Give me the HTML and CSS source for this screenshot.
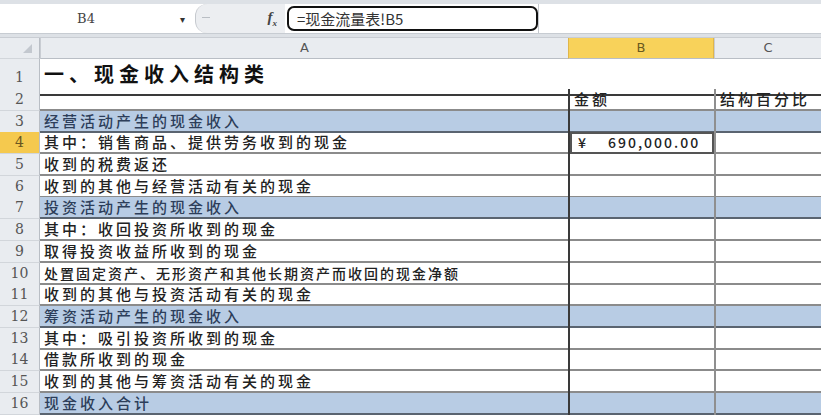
FILE: index.html
```html
<!DOCTYPE html>
<html>
<head>
  <title>现金收入结构类</title>
  <link rel="stylesheet" href="styles.css">
</head>
<body>
  <div class="formula-bar">
    <div class="name-box">
      <span class="cell-ref">B4</span>
      <span class="arrow">&#9662;</span>
    </div>
    <div class="splitter">
      <span class="knob"></span>
      <span class="fx">f<sub>x</sub></span>
    </div>
    <div class="formula">=现金流量表!B5</div>
    <div class="formula-rest"></div>
  </div>

  <div class="sheet">
    <div class="row col-heads">
      <div class="num corner"><span class="tri"></span></div>
      <div class="head">A</div>
      <div class="head active">B</div>
      <div class="head">C</div>
    </div>

    <div class="row title-row">
      <div class="num">1</div>
      <div class="cell a title">一、现金收入结构类</div>
      <div class="cell b"></div>
      <div class="cell c"></div>
    </div>
    <div class="row">
      <div class="num">2</div>
      <div class="cell a"></div>
      <div class="cell b">金额</div>
      <div class="cell c">结构百分比</div>
    </div>
    <div class="row blue">
      <div class="num">3</div>
      <div class="cell a">经营活动产生的现金收入</div>
      <div class="cell b"></div>
      <div class="cell c"></div>
    </div>
    <div class="row">
      <div class="num sel">4</div>
      <div class="cell a">其中：销售商品、提供劳务收到的现金</div>
      <div class="cell b picked"><span>¥</span><span>690,000.00</span></div>
      <div class="cell c"></div>
    </div>
    <div class="row">
      <div class="num">5</div>
      <div class="cell a">收到的税费返还</div>
      <div class="cell b"></div>
      <div class="cell c"></div>
    </div>
    <div class="row">
      <div class="num">6</div>
      <div class="cell a">收到的其他与经营活动有关的现金</div>
      <div class="cell b"></div>
      <div class="cell c"></div>
    </div>
    <div class="row blue">
      <div class="num">7</div>
      <div class="cell a">投资活动产生的现金收入</div>
      <div class="cell b"></div>
      <div class="cell c"></div>
    </div>
    <div class="row">
      <div class="num">8</div>
      <div class="cell a">其中：收回投资所收到的现金</div>
      <div class="cell b"></div>
      <div class="cell c"></div>
    </div>
    <div class="row">
      <div class="num">9</div>
      <div class="cell a">取得投资收益所收到的现金</div>
      <div class="cell b"></div>
      <div class="cell c"></div>
    </div>
    <div class="row">
      <div class="num">10</div>
      <div class="cell a narrow">处置固定资产、无形资产和其他长期资产而收回的现金净额</div>
      <div class="cell b"></div>
      <div class="cell c"></div>
    </div>
    <div class="row">
      <div class="num">11</div>
      <div class="cell a">收到的其他与投资活动有关的现金</div>
      <div class="cell b"></div>
      <div class="cell c"></div>
    </div>
    <div class="row blue">
      <div class="num">12</div>
      <div class="cell a">筹资活动产生的现金收入</div>
      <div class="cell b"></div>
      <div class="cell c"></div>
    </div>
    <div class="row">
      <div class="num">13</div>
      <div class="cell a">其中：吸引投资所收到的现金</div>
      <div class="cell b"></div>
      <div class="cell c"></div>
    </div>
    <div class="row">
      <div class="num">14</div>
      <div class="cell a">借款所收到的现金</div>
      <div class="cell b"></div>
      <div class="cell c"></div>
    </div>
    <div class="row">
      <div class="num">15</div>
      <div class="cell a">收到的其他与筹资活动有关的现金</div>
      <div class="cell b"></div>
      <div class="cell c"></div>
    </div>
    <div class="row blue">
      <div class="num">16</div>
      <div class="cell a">现金收入合计</div>
      <div class="cell b"></div>
      <div class="cell c"></div>
    </div>
  </div>
</body>
</html>
```

FILE: styles.css
```css
body {
  margin: 0;
  width: 821px;
  height: 415px;
  overflow: hidden;
  background-color: #dde1e6;
  font-family: "Noto Sans CJK SC", "DejaVu Sans", sans-serif;
  color: #222222;
}

/* formula bar */
.formula-bar {
  display: flex;
  height: 29px;
  margin-top: 4px;
  background-color: #ffffff;
  border-bottom: 1px solid #c7ccd2;
}

.name-box {
  width: 195px;
  display: flex;
  align-items: center;
  background-color: #ffffff;
}

.cell-ref {
  width: 172px;
  text-align: center;
  font-family: "DejaVu Serif", serif;
  font-size: 13px;
  color: #444444;
}

.arrow {
  font-size: 10px;
  color: #333333;
  margin-left: 8px;
}

.splitter {
  width: 90px;
  display: flex;
  align-items: center;
  justify-content: space-between;
  background-color: #eceef1;
  border-left: 1px solid #c5c9ce;
  border-radius: 12px 0 0 12px;
  padding: 0 8px 0 6px;
  box-sizing: border-box;
}

.knob {
  width: 8px;
  height: 3px;
  border-top: 1px solid #b9bec4;
}

.fx {
  font-family: "Liberation Serif", serif;
  font-style: italic;
  font-weight: bold;
  font-size: 15px;
  color: #444444;
}

.fx sub {
  font-size: 9px;
}

.formula {
  width: 251px;
  box-sizing: border-box;
  margin: 2px 0 0 2px;
  height: 25px;
  border: 2px solid #111111;
  border-radius: 7px;
  padding: 0 8px;
  line-height: 21px;
  font-size: 15px;
  color: #333333;
  background-color: #ffffff;
}

.formula-rest {
  flex: 1;
  border-left: 1px solid #c5c9ce;
}

/* sheet */
.sheet {
  margin-top: 3px;
  background-color: #ffffff;
}

.row {
  display: grid;
  grid-template-columns: 40px 528px 146px 1fr;
  height: 21.7px;
}

.col-heads {
  height: 21px;
  background-color: #e9ecf0;
  border-top: 1px solid #c9cdd3;
}

.head {
  text-align: center;
  font-size: 13px;
  line-height: 20px;
  color: #555555;
  border-left: 1px solid #c9cdd3;
  border-bottom: 1px solid #b9bec5;
  font-family: "DejaVu Sans", sans-serif;
}

.head.active {
  background-color: #f8d25a;
  border-left-color: #e0b64a;
  border-right: 1px solid #e0b64a;
  color: #6a5a20;
}

.corner {
  position: relative;
}

.tri {
  position: absolute;
  right: 7px;
  bottom: 5px;
  width: 0;
  height: 0;
  border-left: 9px solid transparent;
  border-bottom: 9px solid #c3c8cf;
}

.num {
  background-color: #e9ecf0;
  border-bottom: 1px solid #d2d6db;
  border-right: 1px solid #b9bec5;
  box-sizing: border-box;
  text-align: center;
  font-family: "DejaVu Serif", serif;
  font-size: 14px;
  line-height: 21px;
  color: #555555;
}

.num.sel {
  background-color: #f5c94e;
  color: #6a5520;
}

/* bottom rule drawn as inset shadow so the text keeps the full row height */
.cell {
  box-sizing: border-box;
  box-shadow: inset 0 -2px 0 #8b8b8b;
  font-size: 15px;
  font-weight: 500;
  letter-spacing: 3px;
  line-height: 20px;
  padding-left: 4px;
  white-space: nowrap;
  color: #222222;
}

.cell.narrow {
  font-size: 14px;
  letter-spacing: 2px;
}

.cell.b {
  border-left: 2px solid #3a3a3a;
}

.cell.c {
  border-left: 2px solid #8f8f8f;
}

.title-row {
  height: 30px;
}

.title-row .num {
  line-height: 36px;
}

.title-row .cell {
  box-shadow: inset 0 -2px 0 #3a3a3a;
  border-left: none;
}

.title {
  font-size: 20px;
  letter-spacing: 5px;
  font-weight: bold;
  line-height: 29px;
  color: #111111;
}

.blue .cell {
  background-color: #b8cce4;
  box-shadow: inset 0 -2px 0 #5a6470;
}

.blue .cell.a {
  color: #2d3e5a;
}

.picked {
  display: flex;
  gap: 20px;
  padding-left: 8px;
  box-shadow: inset 0 0 0 2px #555555;
  font-size: 14px;
  letter-spacing: 2px;
}
```
